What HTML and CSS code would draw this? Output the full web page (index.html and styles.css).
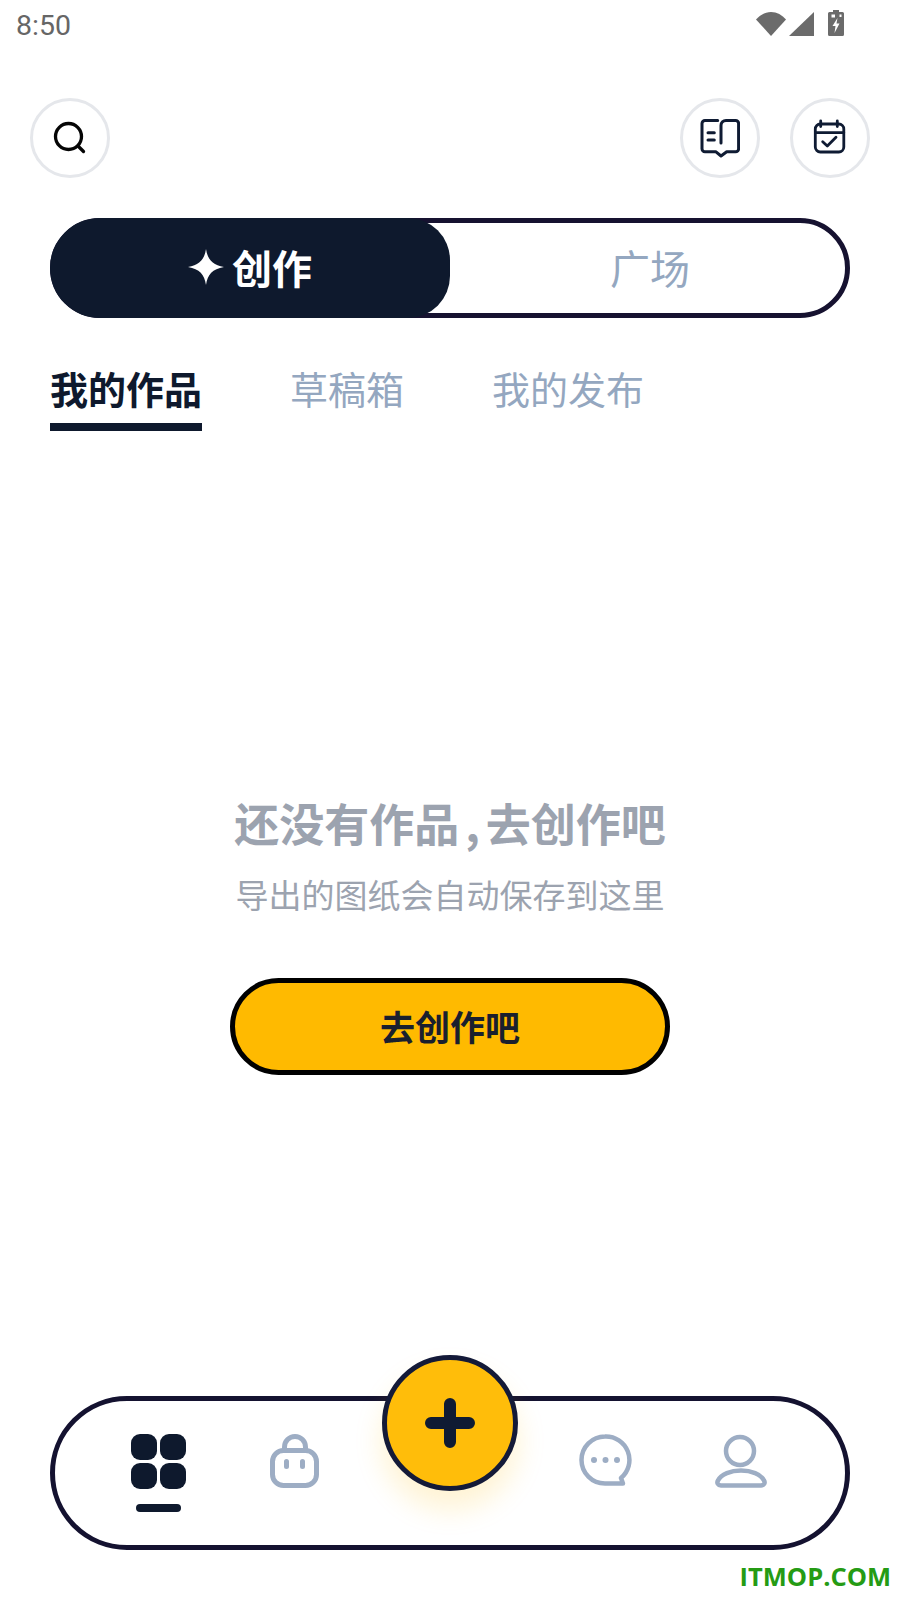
FILE: index.html
```html
<!DOCTYPE html>
<html>
	<head>
		<title>创作</title>
		<meta charset="UTF-8" />
		<link rel="stylesheet" href="styles.css">
	</head>
	<body>
		<div class="screen">
			<div class="status">
				<span class="time">8:50</span>
				<div class="status-icons">
					<svg class="wifi" width="30" height="24" viewBox="0 0 30 24"><path d="M0 7.500C4 3 9 0 15 0s11 3 15 7.500L15 24z"/></svg>
					<svg class="signal" width="25" height="24" viewBox="0 0 25 24"><path d="M25 0v24H0z"/></svg>
					<svg class="battery" width="16" height="26" viewBox="0 0 16 26"><path d="M5 0h6v2h3.500q1.500 0 1.500 1.500v21q0 1.500-1.500 1.500h-13Q0 26 0 24.500v-21Q0 2 1.500 2H5z"/><path class="bolt" d="M9.500 8 4.500 16h3l-1 7 5-9.500h-3z"/><path class="bolt" d="M3.500 4.500h3.500v3H3.500zM11.500 4.500h2v2.500h-2z"/></svg>
				</div>
			</div>

			<div class="toolbar">
				<button class="round-btn">
					<svg width="40" height="40" viewBox="0 0 40 40" fill="none" stroke="#050505" stroke-width="3.300" stroke-linecap="round"><circle cx="18.500" cy="18.500" r="13"/><path d="M28.500 28.500l5 5"/></svg>
				</button>
				<div class="toolbar-right">
					<button class="round-btn">
						<svg width="40" height="40" viewBox="0 0 40 40" fill="none" stroke="#0f1b33" stroke-width="3" stroke-linecap="round" stroke-linejoin="round"><path d="M17.700 2.400H5a3 3 0 0 0-3 3v25.300a3 3 0 0 0 3 3h10.700l5.300 4.300 5.700-4.300h8.900a3 3 0 0 0 3-3V5.400a3 3 0 0 0-3-3h-9.600a5 5 0 0 0-5 5V25"/><path d="M8 14.700h6.300M8 22h6.300"/></svg>
					</button>
					<button class="round-btn">
						<svg width="40" height="40" viewBox="0 0 40 40" fill="none" stroke="#0f1b33" stroke-width="2.800" stroke-linecap="round" stroke-linejoin="round"><rect x="5.300" y="6" width="28.500" height="28" rx="5"/><path d="M10.700 3v5.500M27.300 3v5.500M5.300 14.700h28.500"/><path d="M12.700 23.700l4.600 4.300 8.700-8.700"/></svg>
					</button>
				</div>
			</div>

			<div class="segment">
				<div class="segment-item active">
					<svg width="36" height="36" viewBox="0 0 34 34"><path fill="#fff" d="M17 0c1.500 10 6 15 17 17-11 2-15.500 7-17 17-1.500-10-6-15-17-17C11 15 15.500 10 17 0z"/></svg>
					<span>创作</span>
				</div>
				<div class="segment-item">广场</div>
			</div>

			<div class="tabs">
				<div class="tab current">我的作品</div>
				<div class="tab">草稿箱</div>
				<div class="tab">我的发布</div>
			</div>

			<div class="empty">
				<h2>还没有作品<span class="comma">,</span>去创作吧</h2>
				<p>导出的图纸会自动保存到这里</p>
				<button class="go-btn">去创作吧</button>
			</div>

			<div class="nav">
				<div class="nav-item">
					<svg class="grid-icon" width="56" height="56" viewBox="0 0 56 56" fill="#0e192d"><rect x="1" width="26" height="26" rx="9"/><rect x="30" width="26" height="26" rx="9"/><rect x="1" y="29" width="26" height="26" rx="9"/><rect x="30" y="29" width="26" height="26" rx="9"/></svg>
					<div class="nav-bar"></div>
				</div>
				<div class="nav-item">
					<svg width="56" height="56" viewBox="0 0 56 56" fill="none" stroke="#9dadc4" stroke-width="5" stroke-linecap="round"><rect x="5.500" y="16.500" width="44" height="35" rx="11"/><path d="M17.500 16v-3a10.500 10.500 0 0 1 21 0v3"/><path d="M19.500 27.500v5M35.500 27.500v5"/></svg>
				</div>
				<div class="nav-gap"></div>
				<div class="nav-item">
					<svg width="56" height="56" viewBox="0 0 56 56" fill="none" stroke="#9dadc4" stroke-width="4.500" stroke-linejoin="round"><path d="M28 2.500a23.500 23.500 0 0 0 0 47h18l-2-5.500A23.500 23.500 0 0 0 28 2.500z"/><g fill="#9dadc4" stroke="none"><circle cx="17" cy="26" r="3"/><circle cx="28.500" cy="26" r="3"/><circle cx="40" cy="26" r="3"/></g></svg>
				</div>
				<div class="nav-item">
					<svg width="58" height="56" viewBox="0 0 58 56" fill="none" stroke="#9dadc4" stroke-width="4.500" stroke-linejoin="round"><circle cx="28" cy="17" r="14"/><path d="M9 51.500h40c3 0 4.500-2.500 3-5C49 40 39 36.500 29 36.500S9 40 6 46.500c-1.500 2.500 0 5 3 5z"/></svg>
				</div>
				<button class="fab">
					<svg width="50" height="50" viewBox="0 0 50 50" fill="none" stroke="#0f1b33" stroke-width="12" stroke-linecap="round"><path d="M25 6v38M6 25h38"/></svg>
				</button>
			</div>

			<div class="watermark">ITMOP.COM</div>
		</div>
	</body>
</html>
```

FILE: styles.css
```css
* {
	box-sizing: border-box;
}

body {
	margin: 0;
	background: #fff;
	font-family: "Noto Sans CJK SC", "Noto Sans", sans-serif;
}

button {
	font-family: inherit;
	padding: 0;
	cursor: pointer;
}

.screen {
	position: relative;
	width: 900px;
	height: 1600px;
	overflow: hidden;
}

.status {
	display: flex;
	justify-content: space-between;
	align-items: center;
	height: 50px;
	padding: 0 56px 0 16px;
}

.time {
	font: 28.500px Roboto, sans-serif;
	color: #666;
}

.status-icons {
	display: flex;
	align-items: flex-end;
	margin-bottom: 4px;
	fill: #6b6b6b;
}

.status-icons svg {
	display: block;
}

.signal {
	margin-left: 3px;
	margin-right: 14px;
}

.bolt {
	fill: #fff;
}

.toolbar {
	display: flex;
	justify-content: space-between;
	margin-top: 48px;
	padding: 0 30px;
}

.toolbar-right {
	display: flex;
	gap: 30px;
}

.round-btn {
	display: flex;
	align-items: center;
	justify-content: center;
	width: 80px;
	height: 80px;
	background: #fff;
	border: 3px solid #e5e7eb;
	border-radius: 50%;
}

.segment {
	display: flex;
	width: 800px;
	height: 100px;
	margin: 40px 0 0 50px;
	border: 5px solid #161230;
	border-radius: 50px;
}

.segment-item {
	display: flex;
	align-items: center;
	justify-content: center;
	flex: 1;
	padding: 0 0 2px 5px;
	font-size: 40px;
	color: #94a7c0;
}

.segment-item.active {
	flex: none;
	gap: 8px;
	width: 400px;
	margin: -5px 0 -5px -5px;
	padding: 0 0 2px;
	background: #0e192d;
	border-radius: 50px 42px 42px 50px;
	color: #fff;
	font-weight: 700;
}

.tabs {
	display: flex;
	gap: 88px;
	margin: 22px 0 0 50px;
}

.tab {
	height: 91px;
	padding-top: 20px;
	font-size: 38px;
	line-height: 56px;
	color: #94a7c0;
}

.tab.current {
	border-bottom: 8px solid #0e192d;
	color: #0e192d;
	font-weight: 700;
}

.empty {
	display: flex;
	flex-direction: column;
	align-items: center;
	margin-top: 360px;
	color: #9ca3af;
}

.empty h2 {
	margin: 0;
	font-size: 45px;
	line-height: 64px;
	font-weight: 700;
}

.comma {
	margin: 0 6px;
}

.empty p {
	margin: 14px 0 0;
	font-size: 33px;
	line-height: 50px;
}

.go-btn {
	width: 440px;
	height: 97px;
	margin-top: 59px;
	padding-bottom: 3px;
	background: #ffba00;
	border: 5px solid #000;
	border-radius: 49px;
	font-size: 35px;
	font-weight: 700;
	color: #1a1f2e;
}

.nav {
	position: relative;
	display: flex;
	justify-content: center;
	width: 800px;
	height: 154px;
	margin: 321px 0 0 50px;
	padding-top: 33px;
	background: #fff;
	border: 5px solid #141230;
	border-radius: 77px;
}

.nav-item {
	display: flex;
	flex-direction: column;
	align-items: center;
	width: 136px;
}

.nav-item svg {
	display: block;
}

.grid-icon {
	margin-left: -2px;
}

.nav-gap {
	width: 174px;
}

.nav-bar {
	width: 45px;
	height: 8px;
	margin: 14px 2px 0 0;
	background: #0e192d;
	border-radius: 4px;
}

.fab {
	position: absolute;
	left: 327px;
	top: -46px;
	display: flex;
	align-items: center;
	justify-content: center;
	width: 136px;
	height: 136px;
	background: #ffbd0a;
	border: 5px solid #141a38;
	border-radius: 50%;
	box-shadow: 0 18px 28px rgba(255, 189, 10, 0.18);
}

.watermark {
	position: absolute;
	right: 9px;
	bottom: 7px;
	font: 700 25.500px "Open Sans", sans-serif;
	color: #259b14;
}
```
